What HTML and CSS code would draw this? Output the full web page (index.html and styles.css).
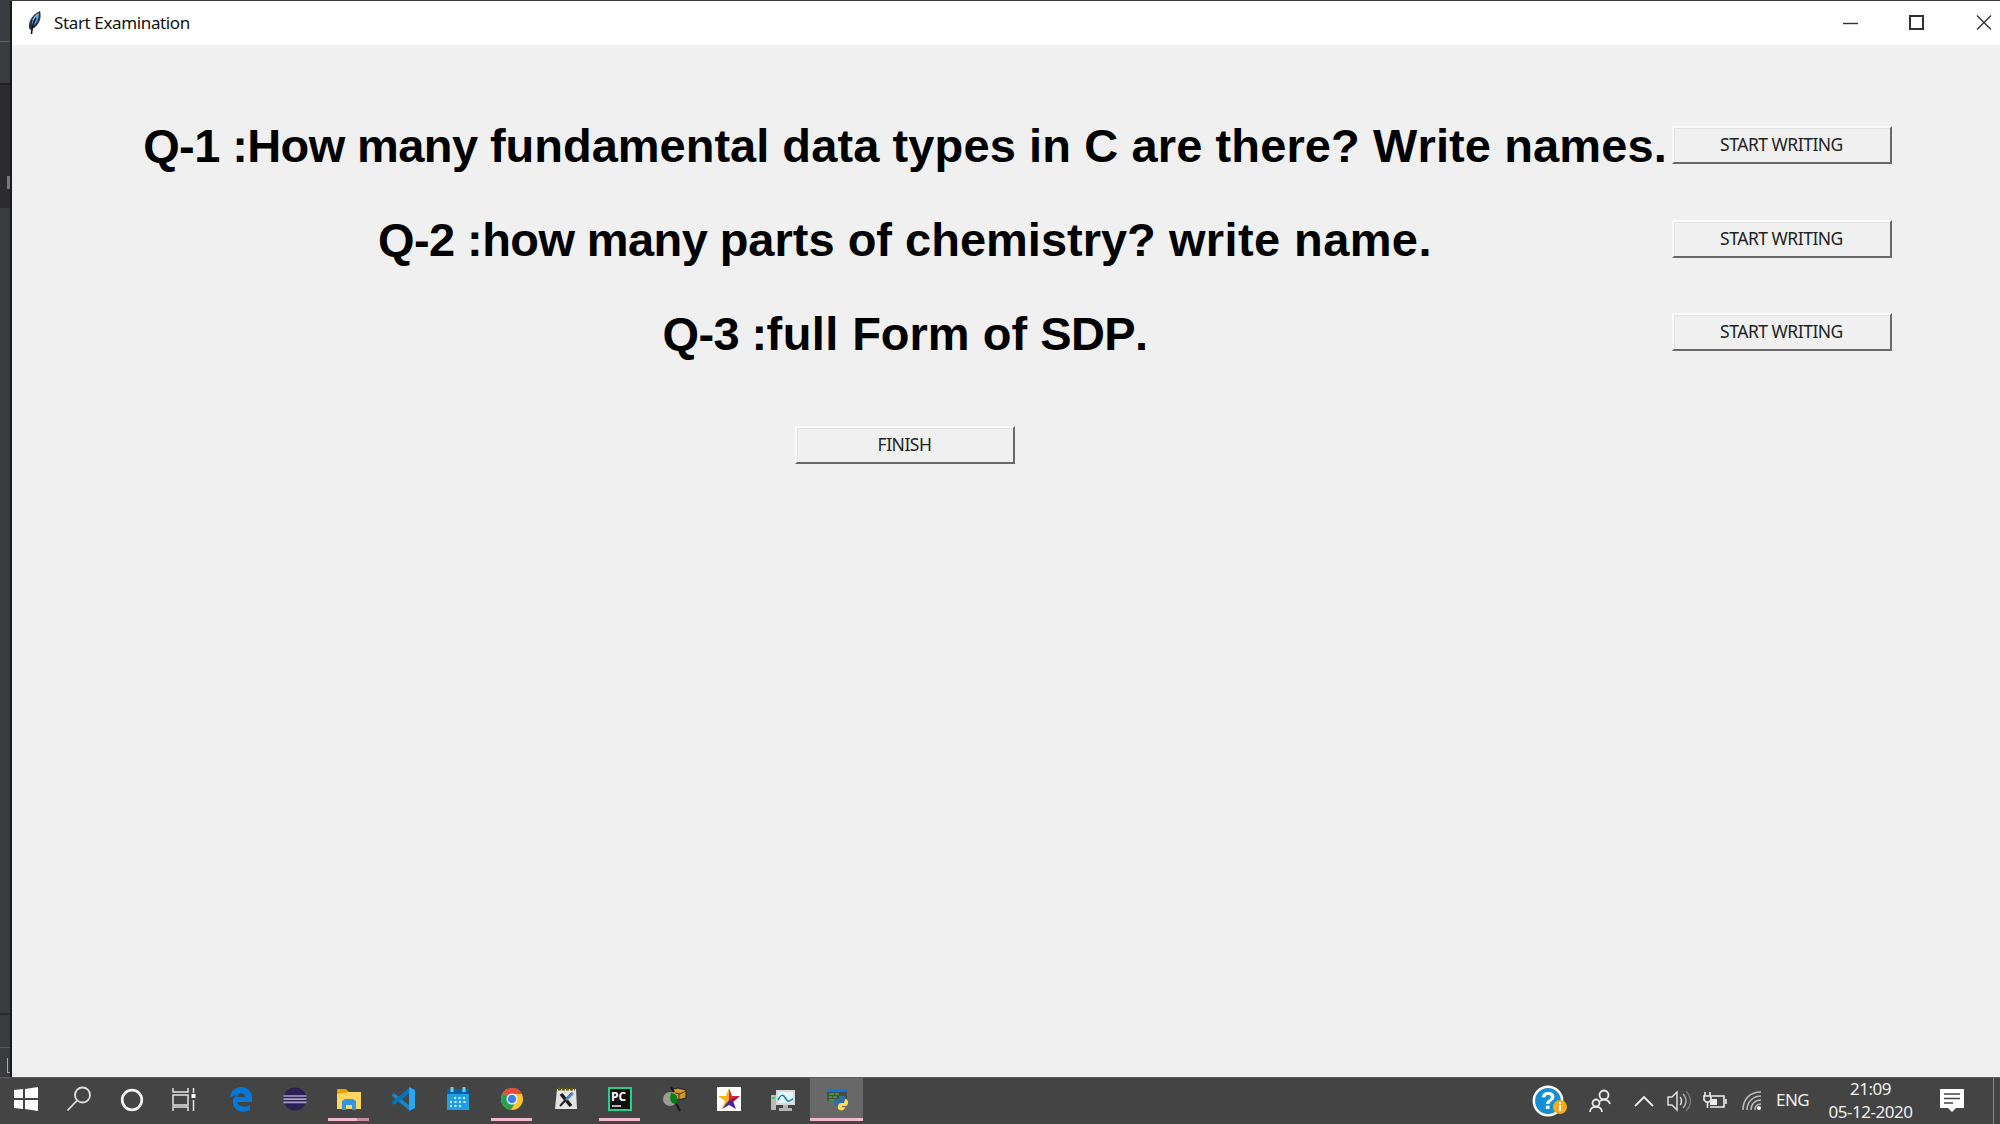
FILE: index.html
```html
<!DOCTYPE html>
<html lang="en">
<head>
<meta charset="utf-8">
<title>Start Examination</title>
<link rel="stylesheet" href="styles.css">
</head>
<body>
<div class="desktop">
  <div class="workspace">
    <aside class="editor-edge">
      <i class="edge-top"></i><i class="edge-tools"></i><i class="edge-dark"></i><i class="edge-tab"></i><i class="edge-main"></i><i class="edge-status"></i><i class="edge-foot"></i>
    </aside>
    <main class="window">
      <header class="titlebar">
        <svg class="feather" width="16" height="26" viewBox="0 0 16 26"><path d="M3 20C0 14 4 5 13 1c2 7-1 15-8 18z" fill="#26323e"/><path d="M5 16C4 10 8 5 12 3c0 6-2 11-7 13z" fill="#559be0"/><path d="M9 8C6 12 5 18 4.500 24" fill="none" stroke="#111" stroke-width="1.500"/><path d="M6 10c2-4 3-5 5-6" fill="none" stroke="#c3dcf2"/></svg>
        <h1 class="title">Start Examination</h1>
        <svg class="controls" width="149" height="18" viewBox="0 0 149 18" fill="none" stroke="#333"><path d="M0 9.500h15" stroke-width="1.400"/><path d="M67 2h13v13H67z" stroke-width="2"/><path d="M134 1.500l14 14M148 1.500l-14 14" stroke-width="1.400"/></svg>
      </header>
      <section class="questions">
        <p class="question"><span class="tight">Q-1 :How many </span>fundamental <span class="loose">data types in C are there? Write names.</span></p><button class="btn">START WRITING</button>
        <p class="question"><span class="tight">Q-2 :how many </span>parts of chemistry? <span class="wide">write name.</span></p><button class="btn">START WRITING</button>
        <p class="question"><span class="tight">Q-3 :</span><span class="wide">full </span>Form of <span class="tight">SDP.</span></p><button class="btn">START WRITING</button>
        <button class="btn finish">FINISH</button>
      </section>
    </main>
  </div>
  <footer class="taskbar">
    <div class="system-buttons">
      <span class="cell"><svg width="26" height="26" viewBox="0 0 26 26" fill="#fff"><path d="M1 4l9-1v9H1zM12 3l13-2v11H12zM1 14h9v9l-9-1zM12 14h13v11l-13-2z"/></svg></span>
      <span class="cell"><svg width="26" height="26" viewBox="0 0 26 26" fill="none" stroke="#e2e2e2" stroke-width="1.8"><circle cx="16.5" cy="9" r="7.5"/><path d="M11 14.500L1.500 24.500"/></svg></span>
      <span class="cell"><svg width="26" height="26" viewBox="0 0 26 26" fill="none" stroke="#f2f2f2" stroke-width="2.700"><circle cx="13" cy="14" r="9.800"/></svg></span>
      <span class="cell"><svg width="26" height="26" viewBox="0 0 26 26" fill="none" stroke="#e2e2e2" stroke-width="1.500"><path d="M2 2v4h15V2M2 9h15v10H2zM2 25v-4h15v4M22.500 2v5M22.500 14v11"/><path d="M20.500 8h4v4h-4z" fill="#fff" stroke="none"/></svg></span>
    </div>
    <div class="apps">
      <span class="cell"><svg width="26" height="26" viewBox="0 0 26 26"><path d="M2 12C3-3 24-2 24 12v4H9c1 5 9 6 13 3v5C14 28 4 24 5 15c0-3 2-5 5-6-4 0-6 1-8 3zM9 11h8c0-5-7-5-8 0z" fill="#0878d7"/></svg></span>
      <span class="cell"><svg width="26" height="26" viewBox="0 0 26 26"><circle cx="13" cy="13" r="11.500" fill="#2c2155"/><path d="M1.500 10h23M1.500 13.200h23M1.500 16.400h23" stroke="#aaa4cc" stroke-width="1.700"/></svg></span>
      <span class="cell open split"><svg width="26" height="26" viewBox="0 0 26 26"><path d="M1 3h9l3 3h11v4H1z" fill="#e7a000"/><path d="M1 8l12-2h12v17H1z" fill="#ffd75e"/><path d="M6 24v-9l3-2h8l3 2v9h-4v-5h-6v5z" fill="#3294e5"/></svg></span>
      <span class="cell"><svg width="26" height="26" viewBox="0 0 26 26"><path d="M1 9l2-2 16 13v5L1 10z" fill="#1686cd"/><path d="M1 17l2 2L19 7V1L1 16z" fill="#0872b8"/><path d="M18 1l6 3v18l-6 3z" fill="#29a8f2"/></svg></span>
      <span class="cell"><svg width="26" height="26" viewBox="0 0 26 26"><path d="M2 3h22v21H2z" fill="#209fe5"/><path d="M2 3h22v5H2z" fill="#0b61a8"/><path d="M7 1v5M19 1v5" stroke="#60d2fb" stroke-width="3"/><path d="M9 12h13M5 16h17M5 20h12" stroke="#ccefff" stroke-width="2" stroke-dasharray="2 2.500"/></svg></span>
      <span class="cell open"><svg width="26" height="26" viewBox="0 0 26 26"><circle cx="13" cy="13" r="11" fill="#fbc52e"/><path d="M13 13L3.500 7.500A11 11 0 0 1 23 8H13z" fill="#e34b3d"/><path d="M3.500 7.500A11 11 0 0 0 12 24l5-9-4-2z" fill="#27a052"/><circle cx="13" cy="13" r="5.500" fill="#fff"/><circle cx="13" cy="13" r="4.300" fill="#3e80ee"/></svg></span>
      <span class="cell"><svg width="26" height="26" viewBox="0 0 26 26"><path d="M4 3h19l1 20H2z" fill="#e4e4e4"/><path d="M5 3h17" stroke="#665713" stroke-width="3" stroke-dasharray="3 1"/><path d="M8 8l10 12" stroke="#16181c" stroke-width="3.500"/><path d="M7 20L19 7" stroke="#222" stroke-width="2"/><path d="M13 14l7-7" stroke="#518aca" stroke-width="2.500"/></svg></span>
      <span class="cell open"><svg width="26" height="26" viewBox="0 0 26 26"><path d="M2 2h22v22H2z" fill="#101010" stroke="#21d18c" stroke-width="2"/><text x="4" y="15" class="pc">PC</text><path d="M5 20h9" stroke="#eee" stroke-width="1.500"/></svg></span>
      <span class="cell"><svg width="26" height="26" viewBox="0 0 26 26"><path d="M11 3l5-1 8 2v8l-8 2-7-5z" fill="#cf9831" stroke="#221e18"/><path d="M13 7l5 1 6-3M17 8v5" fill="none" stroke="#49330c"/><circle cx="8" cy="13" r="7" fill="#989c95"/><path d="M9 7c6 1 8 5 5 11-5 0-7-4-5-11z" fill="#067d1b"/><path d="M14 17l4 8M9 1l3 5" stroke="#171717" stroke-width="2"/></svg></span>
      <span class="cell"><svg width="26" height="26" viewBox="0 0 26 26"><path d="M1 1h24v24H1z" fill="#fff"/><path d="M13 14L13 2l-3 8H2l7 5-3 8z" fill="#f6b51b"/><path d="M13 14V2l3 8h8l-7 5z" fill="#d42647"/><path d="M13 14l-7 9 7-4 7 4-3-8z" fill="#4c249e"/><path d="M13 14l11-4-7 6z" fill="#9c1739"/></svg></span>
      <span class="cell"><svg width="26" height="26" viewBox="0 0 26 26"><path d="M1 9h5v15H1z" fill="#b8bbb8"/><path d="M2 12h3" stroke="#42d44a" stroke-width="2"/><path d="M6 4h19v15H6z" fill="#d8dad8"/><path d="M8 6h15v11H8z" fill="#e4f7ff"/><path d="M8 14c3-6 5-6 8-1s5 0 7 0" fill="none" stroke="#197cad" stroke-width="1.500"/><path d="M13 19h5v3h4v3H9v-3h4z" fill="#b3b6b3"/></svg></span>
      <span class="cell active"><svg width="26" height="26" viewBox="0 0 26 26"><path d="M3 3h20v12H3z" fill="#484d49"/><path d="M3 3h20v3H3z" fill="#0879dd"/><path d="M5 8h5M11 8h4M5 11h3M9 11h4M5 14h6" stroke="#3dab3c" stroke-width="1.700"/><path d="M10 17c0-4 2-4 5-4v-3h4c3 0 3 2 2 7h-5v3h-3c-2 0-3-1-3-3z" fill="#2f6fa7"/><path d="M21 13c4 0 4 6 1 7h-4v1h3c0 5-8 4-7 0 0-4 2-4 6-4z" fill="#ffdb50"/></svg></span>
    </div>
    <div class="tray">
      <svg class="assist" width="36" height="34" viewBox="0 0 36 34"><circle cx="16" cy="17" r="14.200" fill="#168fd2" stroke="#fff" stroke-width="2.500"/><text x="16" y="25" class="help">?</text><circle cx="28" cy="23" r="7" fill="#f7a91c"/><path d="M28 18v2M28 21v6" stroke="#fff" stroke-width="2"/></svg>
      <svg class="people" width="24" height="24" viewBox="0 0 24 24" fill="none" stroke="#eee" stroke-width="1.800"><circle cx="16" cy="6" r="4.500"/><circle cx="8" cy="14" r="3.500"/><path d="M2 23c0-7 12-7 12 0M12 12c4-3 9-1 10 3"/></svg>
      <svg class="chevron" width="20" height="12" viewBox="0 0 20 12" fill="none" stroke="#eee" stroke-width="1.800"><path d="M1 11l9-9 9 9"/></svg>
      <svg class="sound" width="24" height="22" viewBox="0 0 24 22" fill="none" stroke="#ddd" stroke-width="1.500"><path d="M1 7h4l5-5v18l-5-5H1zM13 7c2 2 2 6 0 8"/><path d="M16 4c4 4 4 10 0 14" stroke="#aaa"/><path d="M19 1c6 6 6 14 0 20" stroke="#777"/></svg>
      <svg class="battery" width="24" height="20" viewBox="0 0 24 20"><path d="M9 5h12v11H7M23 8v5M2 1v4M7 1v4M1 5h7v4l-2 2H3L1 9zM4.500 11v6" fill="none" stroke="#eee" stroke-width="1.600"/><path d="M9 8h5v6H7v-3z" fill="#eee"/></svg>
      <svg class="wifi" width="20" height="20" viewBox="0 0 20 20" fill="none" stroke="#bbb" stroke-width="1.600"><path d="M1 19C1 8 8 1 19 1M5 19C5 11 11 5 19 5M9 19c0-6 4-10 10-10M13 19c0-4 2-6 6-6"/><circle cx="17" cy="17" r="2" fill="#fff" stroke="none"/></svg>
      <span class="language">ENG</span>
      <time class="clock"><span class="time">21:09</span><span class="date">05-12-2020</span></time>
      <svg class="notice" width="24" height="25" viewBox="0 0 24 25"><path d="M0 1h24v19h-8l-4 4-4-4H0z" fill="#fff"/><path d="M4 6h16M4 10.500h16M4 15h9" stroke="#444" stroke-width="1.600"/></svg>
      <i class="show-desktop"></i>
    </div>
  </footer>
</div>
</body>
</html>
```
FILE: styles.css
```css
* { box-sizing: border-box; }
body { margin: 0; background: #444; }
.desktop { width: 2000px; height: 1124px; display: flex; flex-direction: column; overflow: hidden; }
.workspace { height: 1077px; display: flex; border-top: 1px solid #3c3c40; }
.editor-edge { width: 12px; display: flex; flex-direction: column; background: #393b3e; border-right: 2px solid #19191e; }
.edge-top { height: 41px; border-bottom: 1px solid #606266; }
.edge-tools { height: 41px; }
.edge-dark { height: 125px; background: #2b2b2d; border-top: 2px solid #202124; }
.edge-tab { height: 13px; width: 3px; margin: -32px 0 19px auto; background: #777; }
.edge-main { height: 807px; border-bottom: 2px solid #292a2d; }
.edge-status { height: 33px; border-bottom: 1px solid #55575a; }
.edge-foot { width: 3px; height: 15px; margin: 10px 0 0 auto; border-left: 1px solid #aaa; border-bottom: 1px solid #aaa; }
.window { flex: 1; background: #f0f0f0; }
.titlebar { height: 44px; background: #fff; display: flex; align-items: center; padding: 0 8px 0 15px; }
.feather { margin-right: 11px; }
.title { margin: 0; font: 400 17px/24px "Noto Sans", sans-serif; letter-spacing: -.37px; color: #111; }
.controls { margin-left: auto; }
.questions { display: grid; grid-template-columns: 1528px 220px; grid-template-rows: repeat(4, 93.700px); column-gap: 3px; padding: 53px 0 0 129px; align-items: center; }
.question { margin: 0; padding-top: 3px; text-align: center; white-space: nowrap; font: 700 47px/54px "Liberation Sans", Arial, sans-serif; font-kerning: none; color: #000; }
.tight { letter-spacing: -.600px; }
.loose { letter-spacing: .110px; }
.wide { letter-spacing: .400px; }
.btn { width: 220px; height: 38px; padding: 0 1px 2px 0; border: 2px solid; border-color: #fafafa #696969 #696969 #fafafa; background: #f0f0f0; box-shadow: inset 1px 1px #e3e3e3; color: #222; font: 400 17.500px/24px "Noto Sans", sans-serif; letter-spacing: -.500px; }
.finish { justify-self: center; margin-top: 39px; }
.taskbar { height: 47px; background: #444; border-top: 1px solid #5d5d5d; display: flex; color: #f0f0f0; font-family: "Noto Sans", sans-serif; }
.system-buttons { display: flex; width: 213.500px; }
.system-buttons .cell { width: 52.700px; padding-left: 0; }
.apps { display: flex; }
.apps .cell { width: 54.200px; }
.cell { height: 46px; display: flex; align-items: center; justify-content: center; padding: 0 0 4px 1px; }
.open { background: linear-gradient(#f4b9d1, #f4b9d1) center 40px / 41px 3px no-repeat; }
.split { background: linear-gradient(90deg, #f4b9d1 70%, #c98da5 70%) center 40px / 41px 3px no-repeat; }
.active { background: linear-gradient(#f4b9d1, #f4b9d1) center 40px / 53px 3px no-repeat, linear-gradient(#686868, #686868) center top / 53px 43px no-repeat; }
.pc { font: 700 12px "Open Sans", sans-serif; fill: #fff; }
.help { font: 700 24px "Liberation Sans", sans-serif; fill: #fff; text-anchor: middle; }
.tray { margin-left: auto; display: flex; align-items: center; padding-bottom: 1px; }
.assist { overflow: visible; }
.people { margin-left: 20px; }
.chevron { margin-left: 22px; }
.sound { margin-left: 13px; }
.battery { margin-left: 12px; }
.wifi { margin-left: 15px; }
.language { margin-left: 14px; width: 35px; font-size: 17px; letter-spacing: -.500px; padding-bottom: 2px; }
.clock { margin-left: 16px; width: 87px; display: flex; flex-direction: column; text-align: center; font-size: 17px; line-height: 23px; letter-spacing: -.450px; padding-bottom: 2px; }
.notice { margin-left: 26px; }
.show-desktop { width: 1px; height: 46px; margin: 0 6px 0 29px; background: #888; }
```
